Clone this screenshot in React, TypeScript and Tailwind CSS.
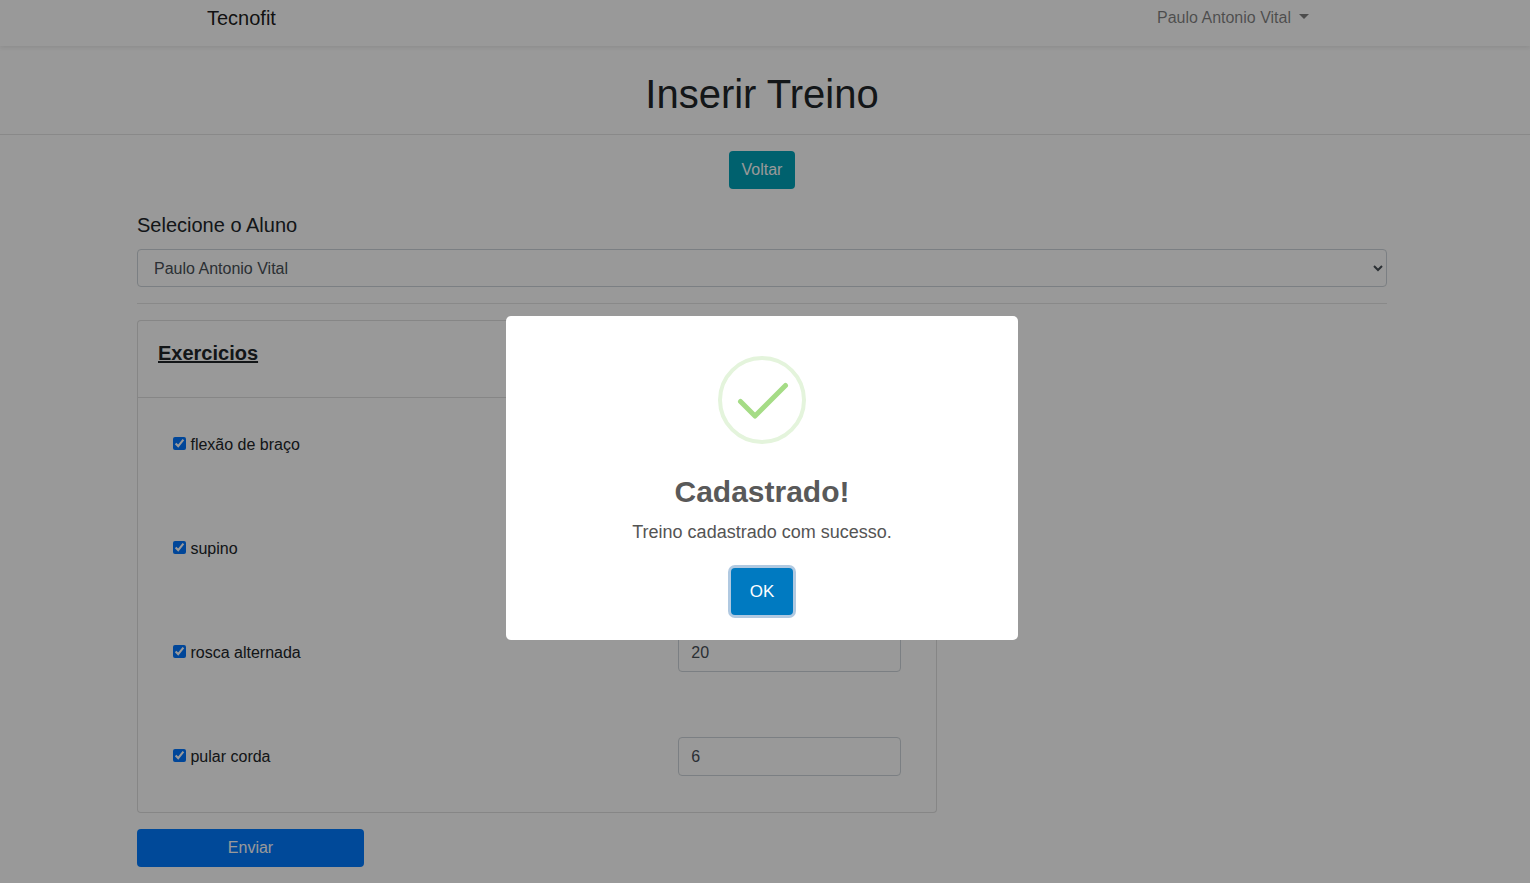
import React from "react";

const exercises = [
  { id: "flexao", name: "flexão de braço", reps: "" },
  { id: "supino", name: "supino", reps: "" },
  { id: "rosca", name: "rosca alternada", reps: "20" },
  { id: "corda", name: "pular corda", reps: "6" },
];

function Navbar() {
  return (
    <nav className="bg-white pr-[6px] pb-[10px] shadow-[0_2px_4px_rgba(0,0,0,0.075)]">
      <div className="mx-auto flex h-9 max-w-[1110px] items-center justify-between">
        <a href="#inicio" className="text-[20px] leading-[30px] text-black/90">
          Tecnofit
        </a>
        <button type="button" className="flex items-center gap-2 pr-2 text-black/50">
          Paulo Antonio Vital
          <svg width="10" height="5" viewBox="0 0 10 5" aria-hidden="true" fill="currentColor" className="mb-1">
            <path d="M0 0h10L5 5z" />
          </svg>
        </button>
      </div>
    </nav>
  );
}

function ExerciseCard() {
  return (
    <section className="mt-4 w-[64%] rounded-[4px] border border-black/[0.125] bg-white">
      <header className="h-[77px] border-b border-black/[0.125] px-5 pt-5">
        <h2 className="text-[20px] leading-6 font-bold underline">Exercicios</h2>
      </header>
      <div className="flex flex-col gap-[65px] px-5 pt-[27px] pb-9">
        {exercises.map((exercise) => (
          <div key={exercise.id} className="flex h-[39px] items-center">
            <div className="w-2/3 px-[15px]">
              <label>
                <input type="checkbox" defaultChecked className="h-[13px] w-[13px] accent-[#0075ff]" />{" "}
                {exercise.name}
              </label>
            </div>
            <div className="w-1/3 px-[15px]">
              <input
                type="text"
                aria-label={exercise.name}
                defaultValue={exercise.reps}
                className="h-[39px] w-full rounded-[4px] border border-[#ced4da] bg-white px-3 text-[#495057]"
              />
            </div>
          </div>
        ))}
      </div>
    </section>
  );
}

function SuccessDialog() {
  return (
    <div className="fixed inset-0 flex items-center justify-center bg-black/40 pt-[73px] pr-[6px]">
      <div
        role="dialog"
        aria-modal="true"
        aria-labelledby="dialog-title"
        className="flex w-[512px] max-w-full flex-col items-center rounded-[5px] bg-white px-5 pt-10 pb-[25px]"
      >
        <svg width="88" height="88" viewBox="0 0 88 88" fill="none" aria-hidden="true">
          <circle cx="44" cy="44" r="42" stroke="#e4f4dc" strokeWidth="4" />
          <path
            d="M22.5 45.5L37 60L67.5 29.5"
            stroke="#a5dc86"
            strokeWidth="5"
            strokeLinecap="round"
            strokeLinejoin="round"
          />
        </svg>
        <h2 id="dialog-title" className="mt-[30px] text-[30px] leading-9 font-bold text-[#595959]">
          Cadastrado!
        </h2>
        <p className="mt-2 text-[18px] leading-7 text-[#545454]">Treino cadastrado com sucesso.</p>
        <button
          type="button"
          className="mt-[22px] h-[47px] w-[62px] rounded-[4px] bg-[#007ac1] text-[17px] text-white shadow-[0_0_0_3px_#b0c9e1]"
        >
          OK
        </button>
      </div>
    </div>
  );
}

export default function App() {
  return (
    <div className="min-h-screen bg-white font-['Liberation_Sans',Arial,sans-serif] text-[16px] leading-6 text-[#212529]">
      <Navbar />
      <main>
        <div className="border-b border-black/10 pt-6 pr-[6px] pb-4">
          <h1 className="text-center text-[40px] leading-[48px]">Inserir Treino</h1>
        </div>
        <div className="flex flex-col items-center pt-4 pr-[6px]">
          <button type="button" className="h-[38px] rounded-[4px] bg-[#00a2b8] px-[13px] text-white">
            Voltar
          </button>
          <form className="mt-6 w-10/12 px-[10px] pb-4">
            <label htmlFor="aluno" className="block text-[20px] leading-6">
              Selecione o Aluno
            </label>
            <select
              id="aluno"
              className="mt-3 block h-[38px] w-full rounded-[4px] border border-[#ced4da] bg-white px-3 text-[#495057]"
            >
              <option>Paulo Antonio Vital</option>
            </select>
            <hr className="mt-4 border-black/10" />
            <ExerciseCard />
            <button type="button" className="mt-4 block h-[38px] w-[227px] rounded-[4px] bg-[#007bff] text-white">
              Enviar
            </button>
          </form>
        </div>
      </main>
      <SuccessDialog />
    </div>
  );
}
